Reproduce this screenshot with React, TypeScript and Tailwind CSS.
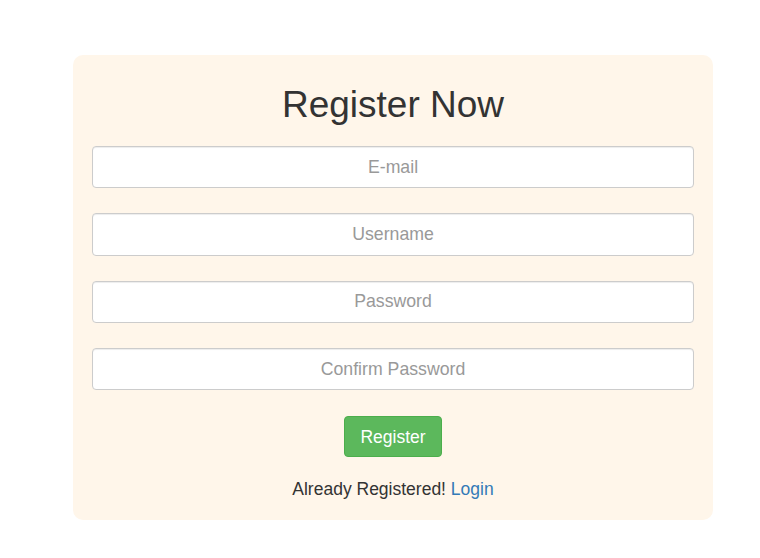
import React from "react";

export default function App() {
  const fields = [
    { ph: "E-mail", type: "email" },
    { ph: "Username", type: "text" },
    { ph: "Password", type: "password" },
    { ph: "Confirm Password", type: "password" },
  ];
  return (
    <div
      className="min-h-[558px] w-[760px] bg-white pt-[55px]"
      style={{ fontFamily: '"Liberation Sans", Arial, sans-serif' }}
    >
      <div className="ml-[73px] w-[640px] rounded-[10px] bg-[#fff6ea] px-[19px] pt-[30px] pb-[18px] text-[#333]">
        <h1 className="text-center text-[37px] leading-[40px] font-normal text-[#333]">Register Now</h1>
        <div className="mt-[21px] flex flex-col gap-[25px]">
          {fields.map((f) => (
            <input
              key={f.ph}
              type={f.type}
              placeholder={f.ph}
              className="h-[42.33px] w-full rounded-[4px] border border-[#ccc] bg-white px-3 text-center text-[17.7px] text-[#555] placeholder:text-[#999] shadow-[inset_0_1px_1px_rgba(0,0,0,0.075)] outline-none"
            />
          ))}
        </div>
        <div className="mt-[26px] flex justify-center">
          <button className="h-[41px] w-[98px] rounded-[4px] border border-[#4cae4c] bg-[#5cb85c] text-[17.5px] text-white">
            Register
          </button>
        </div>
        <p className="mt-[20px] text-center text-[17.5px] leading-[25px]">
          Already Registered! <a href="#" className="text-[#337ab7]">Login</a>
        </p>
      </div>
    </div>
  );
}
